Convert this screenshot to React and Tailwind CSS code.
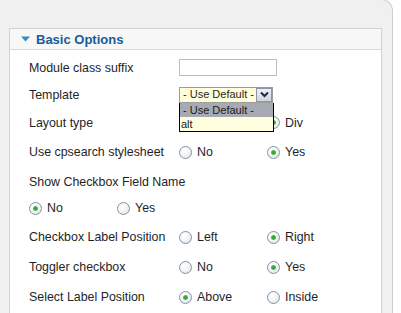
import React from "react";

const font = { fontFamily: '"Liberation Sans", Arial, sans-serif' };

function Radio({ checked }) {
  return (
    <span className="relative inline-block w-[13px] h-[13px] shrink-0 rounded-full border border-[#8193a8] bg-[radial-gradient(circle_at_35%_30%,#ffffff_0%,#f4f4f4_50%,#d9dde3_100%)]">
      {checked && (
        <span className="absolute left-[3px] top-[3px] w-[5px] h-[5px] rounded-full bg-[radial-gradient(circle,#2c9f2c_0%,#3fb43f_55%,#a9dca9_100%)]" />
      )}
    </span>
  );
}

function Option({ label, checked }) {
  return (
    <div className="flex items-center w-[88px] shrink-0">
      <Radio checked={checked} />
      <span className="ml-[5px] text-[12.4px] leading-[14px] text-[#1f1f28]">{label}</span>
    </div>
  );
}

function Row({ label, h, children }) {
  return (
    <div className={`flex items-center ${h}`}>
      <div className="w-[150px] shrink-0 text-[12.4px] leading-[14px] text-[#1f1f28] whitespace-nowrap">{label}</div>
      {children}
    </div>
  );
}

export default function App() {
  return (
    <div className="w-[401px] h-[313px] overflow-hidden bg-white" style={font}>
      <div className="mt-[-1px] w-[393px] h-[330px] bg-[#f0f0f0] border-t border-r border-[#cdcdcd] rounded-tr-[12px] pt-[28px] pl-[9px]">
        <div className="w-[373px] h-[300px] border border-[#d3d3d3] bg-white">
          <div className="h-[21px] border-b border-[#d8d8d8] bg-[#f7f7f7] flex items-center pl-[11px]">
            <svg width="9" height="6" viewBox="0 0 9 6" className="mr-[6px]">
              <polygon points="0,0.5 9,0.5 4.5,5.5" fill="#2e8ec6" />
            </svg>
            <span className="text-[13px] font-bold leading-[15px] text-[#185c98]">Basic Options</span>
          </div>
          <div className="pt-[4px] pl-[19px]">
            <Row label="Module class suffix" h="h-[27px]">
              <div className="w-[98px] h-[17px] border border-[#bdbdbd] bg-white" />
            </Row>
            <Row label="Template" h="h-[27px]">
              <div className="relative z-10">
                <div className="w-[94px] h-[16px] border border-[#9d9d9d] bg-[#ffffdc] flex items-center">
                  <span className="pl-[3px] text-[11px] leading-[13px] text-[#1f1f28] flex-1 whitespace-nowrap overflow-hidden">- Use Default -</span>
                  <span className="w-[16px] h-[14px] shrink-0 border border-[#8e95a6] bg-[linear-gradient(#eef0f6,#cfd4e0)] flex items-center justify-center">
                    <svg width="9" height="7" viewBox="0 0 9 7">
                      <path d="M1 1.5 L4.5 5 L8 1.5" stroke="#1d2a4a" strokeWidth="2" fill="none" />
                    </svg>
                  </span>
                </div>
                <div className="absolute left-0 top-[16px] w-[95px] border border-black border-t-0 bg-[#ffffe0]">
                  <div className="h-[14px] bg-[#a7aab3] pl-[3px] text-[11px] leading-[14px] text-[#1a1a1a] whitespace-nowrap">- Use Default -</div>
                  <div className="h-[14px] pl-[1px] text-[11px] leading-[14px] text-[#1a1a1a]">alt</div>
                </div>
              </div>
            </Row>
            <Row label="Layout type" h="h-[29px]">
              <Option label="Table" />
              <Option label="Div" checked />
            </Row>
            <Row label="Use cpsearch stylesheet" h="h-[30px]">
              <Option label="No" />
              <Option label="Yes" checked />
            </Row>
            <div className="flex items-center h-[30px] text-[12.4px] leading-[14px] text-[#1f1f28]">Show Checkbox Field Name</div>
            <div className="flex items-start h-[25px] pt-[4px]">
              <Option label="No" checked />
              <Option label="Yes" />
            </div>
            <Row label="Checkbox Label Position" h="h-[30px]">
              <Option label="Left" />
              <Option label="Right" checked />
            </Row>
            <Row label="Toggler checkbox" h="h-[30px]">
              <Option label="No" />
              <Option label="Yes" checked />
            </Row>
            <Row label="Select Label Position" h="h-[30px]">
              <Option label="Above" checked />
              <Option label="Inside" />
            </Row>
          </div>
        </div>
      </div>
    </div>
  );
}
